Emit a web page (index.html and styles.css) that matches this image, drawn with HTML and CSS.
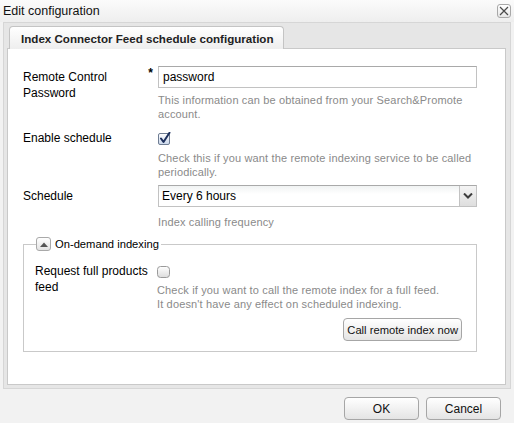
FILE: index.html
```html
<!DOCTYPE html>
<html>
<head>
<meta charset="utf-8">
<link rel="stylesheet" href="styles.css">
</head>
<body>
<div class="window">
  <div class="titlebar">
    <span class="title">Edit configuration</span>
    <span class="close">
      <svg width="12" height="12" viewBox="0 0 12 12"><path d="M2 2 L10 10 M10 2 L2 10" stroke="#4a4a4a" stroke-width="1.2" fill="none"/></svg>
    </span>
  </div>
  <div class="panel">
    <div class="strip">
      <div class="tab">Index Connector Feed schedule configuration</div>
    </div>
    <div class="body">
      <div class="row">
        <div class="label">Remote Control Password<span class="req">*</span></div>
        <div class="field">
          <div class="input">password</div>
          <div class="help">This information can be obtained from your Search&amp;Promote account.</div>
        </div>
      </div>
      <div class="row">
        <div class="label">Enable schedule</div>
        <div class="field">
          <div class="control">
            <svg class="check" width="13" height="13" viewBox="0 0 13 13">
              <defs><linearGradient id="cg" x1="0" y1="0" x2="0" y2="1"><stop offset="0" stop-color="#ffffff"/><stop offset="1" stop-color="#c9d6ea"/></linearGradient></defs>
              <rect x="0.5" y="1.5" width="11" height="11" rx="1.5" fill="url(#cg)" stroke="#6f7d93"/>
              <path d="M3 6.5 L5.5 10 L11.5 0.8" stroke="#1c2f5c" stroke-width="2" fill="none" stroke-linecap="round" stroke-linejoin="round"/>
            </svg>
          </div>
          <div class="help help-tight">Check this if you want the remote indexing service to be called periodically.</div>
        </div>
      </div>
      <div class="row">
        <div class="label">Schedule</div>
        <div class="field">
          <div class="select">
            <span class="select-text">Every 6 hours</span>
            <span class="select-btn">
              <svg width="10" height="6" viewBox="0 0 10 6"><path d="M1 0.5 L5 4.5 L9 0.5" stroke="#3c3c3c" stroke-width="2" fill="none"/></svg>
            </span>
          </div>
          <div class="help help-loose">Index calling frequency</div>
        </div>
      </div>
      <fieldset class="group">
        <legend class="legend">
          <span class="collapse">
            <svg width="8" height="5" viewBox="0 0 8 5"><path d="M0 5 L4 0.5 L8 5 Z" fill="#555"/></svg>
          </span>
          <span>On-demand indexing</span>
        </legend>
        <div class="row row-inner">
          <div class="label">Request full products feed</div>
          <div class="field">
            <div class="control">
              <svg class="check" width="13" height="13" viewBox="0 0 13 13">
                <defs><linearGradient id="ug" x1="0" y1="0" x2="0" y2="1"><stop offset="0" stop-color="#ffffff"/><stop offset="1" stop-color="#dcdcdc"/></linearGradient></defs>
                <rect x="0.5" y="0.5" width="12" height="11" rx="3" fill="url(#ug)" stroke="#9a9a9a"/>
              </svg>
            </div>
            <div class="help help-none">Check if you want to call the remote index for a full feed.<br>It doesn't have any effect on scheduled indexing.</div>
            <div class="actions">
              <button class="btn btn-small">Call remote index now</button>
            </div>
          </div>
        </div>
      </fieldset>
    </div>
  </div>
  <div class="footer">
    <button class="btn btn-wide">OK</button>
    <button class="btn btn-wide">Cancel</button>
  </div>
</div>
</body>
</html>
```

FILE: styles.css
```css
* { box-sizing: border-box; }
html, body { margin: 0; padding: 0; }
body {
  font-family: "Liberation Sans", Arial, sans-serif;
  font-size: 12px;
  color: #000;
  background: #f2f2f2;
}
.window {
  width: 514px;
  height: 423px;
  display: flex;
  flex-direction: column;
  background: #f2f2f2;
}
.titlebar {
  height: 22px;
  display: flex;
  align-items: center;
  justify-content: space-between;
  padding: 0 3px 0 3px;
  background: linear-gradient(#fbfbfb, #eeeeee);
}
.title { font-size: 12.5px; color: #111; }
.close {
  width: 14px;
  height: 14px;
  border: 1px solid #a8a8a8;
  border-radius: 3px;
  background: linear-gradient(#ffffff, #e6e6e6);
  display: flex;
  align-items: center;
  justify-content: center;
}
.panel {
  margin: 0 3px 0 3px;
  height: 367px;
  border: 1px solid #d6d6d6;
  background: #e6e6e6;
  padding: 0 4px 3px 3px;
  display: flex;
  flex-direction: column;
}
.strip {
  height: 25px;
  display: flex;
  align-items: flex-end;
  padding-left: 2px;
}
.tab {
  height: 23px;
  width: 275px;
  margin-bottom: -1px;
  position: relative;
  z-index: 1;
  border: 1px solid #c4c4c4;
  border-bottom: none;
  border-radius: 4px 4px 0 0;
  background: linear-gradient(#ffffff, #eeeeee);
  font-weight: bold;
  font-size: 11.6px;
  color: #222;
  display: flex;
  align-items: center;
  padding-left: 11px;
}
.body {
  flex: 1;
  background: #fff;
  border: 1px solid #c9c9c9;
  padding: 17px 28px 0 15px;
}
.row {
  display: grid;
  grid-template-columns: 135px 1fr;
  margin-bottom: 6px;
}
.label {
  line-height: 16px;
  padding-top: 3px;
  padding-right: 14px;
  position: relative;
}
.req {
  position: absolute;
  right: 5px;
  top: -1px;
  font-weight: bold;
  font-size: 12px;
}
.input {
  height: 22px;
  border: 1px solid #c2c2c2;
  border-top-color: #a9a9a9;
  padding-left: 4px;
  line-height: 20px;
  font-size: 12px;
}
.help {
  margin-top: 5px;
  font-size: 11px;
  letter-spacing: 0.15px;
  line-height: 14px;
  color: #8a8a8a;
}
.help-tight { margin-top: 2px; }
.help-loose { margin-top: 8px; }
.help-none { margin-top: 0; }
.control {
  height: 22px;
  display: flex;
  align-items: center;
}
.check { display: block; }
.select {
  height: 22px;
  border: 1px solid #c2c2c2;
  border-top-color: #a9a9a9;
  display: flex;
  background: linear-gradient(#f0f3f3, #ffffff 40%);
}
.select-text {
  flex: 1;
  padding-left: 3px;
  line-height: 20px;
}
.select-btn {
  width: 17px;
  border-left: 1px solid #c2c2c2;
  background: linear-gradient(#f4f4f4, #dedede);
  display: flex;
  align-items: center;
  justify-content: center;
}
.group {
  margin: 7px 0 0 0;
  padding: 9px 14px 10px 11px;
  border: 1px solid #c9c9c9;
  min-width: 0;
}
.legend {
  padding: 0 2px 0 0;
  margin-left: 1px;
  display: flex;
  align-items: center;
  gap: 4px;
  line-height: 16px;
  font-size: 11.2px;
}
.collapse {
  width: 15px;
  height: 14px;
  border: 1px solid #a9a9a9;
  border-radius: 3px;
  background: linear-gradient(#ffffff, #e3e3e3);
  display: flex;
  align-items: center;
  justify-content: center;
}
.row-inner {
  grid-template-columns: 122px 1fr;
  margin-bottom: 0;
}
.row-inner .label { padding-top: 2px; padding-right: 0; }
.actions {
  display: flex;
  justify-content: flex-end;
  margin-top: 7px;
}
.btn {
  font-family: "Liberation Sans", Arial, sans-serif;
  font-size: 12px;
  color: #111;
  height: 23px;
  padding: 0 4px;
  border: 1px solid #a6a6a6;
  border-radius: 4px;
  background: linear-gradient(#ffffff, #e4e4e4);
}
.btn-small { font-size: 11.2px; padding: 0 3px; }
.footer {
  display: flex;
  justify-content: flex-end;
  gap: 7px;
  padding: 8px 13px 0 0;
}
.btn-wide { width: 75px; }
```
